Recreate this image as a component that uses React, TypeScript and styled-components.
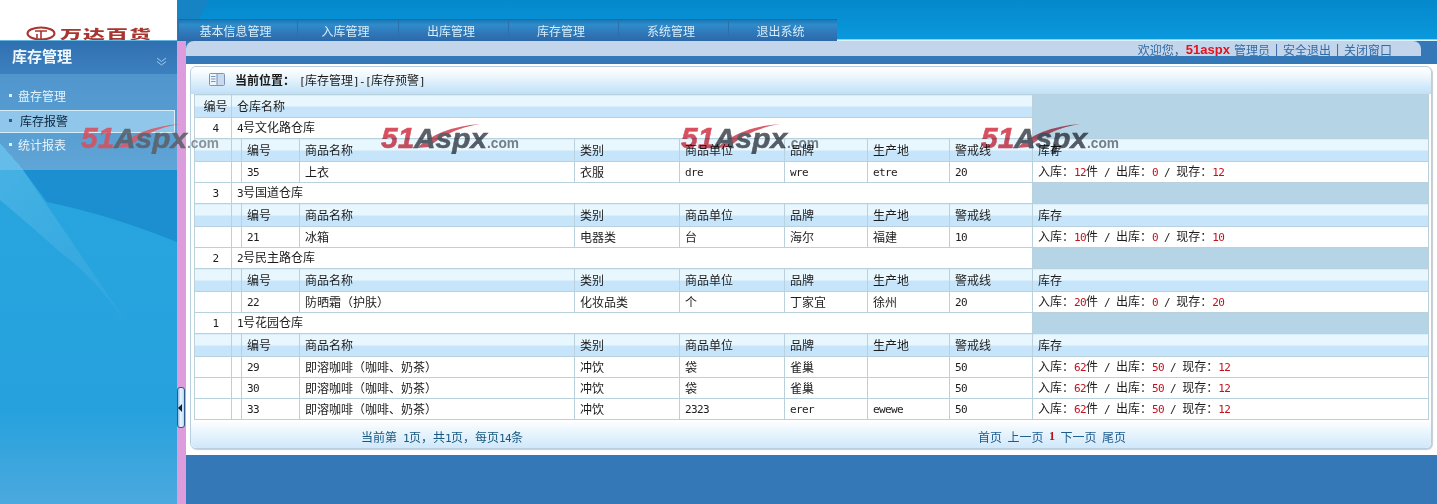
import React from "react";
import styled, { createGlobalStyle } from "styled-components";

const lineColor = "#b9d0dd";
const cjk = `"Noto Sans CJK SC", "Liberation Sans", sans-serif`;

const GlobalStyle = createGlobalStyle`
  html, body {
    margin: 0;
    padding: 0;
    height: 100%;
    overflow: hidden;
    background: #3578b8;
  }
  body {
    font-family: ${cjk};
    font-size: 12px;
  }
`;

const Page = styled.div`
  position: relative;
  width: 1437px;
  height: 504px;
  display: flex;
  flex-direction: column;
  overflow: hidden;
`;

/* ---------- top bar ---------- */

const TopBar = styled.header`
  height: 41px;
  flex: none;
  display: flex;
`;

const Logo = styled.div`
  width: 177px;
  height: 41px;
  box-sizing: border-box;
  background: white;
  padding: 26px 0 0 26px;
  display: flex;
  gap: 4px;
  overflow: hidden;
  border-bottom: 1px solid #62b4dc;
`;

const LogoMark = styled.svg`
  flex: none;
  width: 30px;
  height: 15px;
`;

const LogoText = styled.span`
  display: inline-block;
  font-size: 22px;
  line-height: 22px;
  font-weight: 900;
  letter-spacing: 1px;
  color: #a8352f;
  white-space: nowrap;
  margin-top: 1px;
  transform: scaleY(0.56);
  transform-origin: top left;
`;

const NavArea = styled.nav`
  flex: 1;
  display: flex;
  align-items: flex-end;
  padding-left: 1px;
  background:
    linear-gradient(118deg, #1583c4 0 28px, transparent 29px),
    linear-gradient(#0588cc, #0a98dc 95%, #c9eefb 97%, #e6f6fc);
`;

const Tab = styled.a<{ $w: number }>`
  width: ${(props) => props.$w}px;
  height: 22px;
  box-sizing: border-box;
  padding-right: 5px;
  display: flex;
  align-items: center;
  justify-content: center;
  color: #d7edfb;
  border-top: 1px solid #0f6fa9;
  border-left: 1px solid #2a71ac;
  background: linear-gradient(#1b78b7, #2f8ccb 22%, #2f78ba 60%, #2d69a8);
`;

/* ---------- body ---------- */

const Body = styled.div`
  flex: 1;
  display: flex;
  min-height: 0;
`;

const Sidebar = styled.aside`
  width: 177px;
  flex: none;
  display: flex;
  flex-direction: column;
`;

const SideHead = styled.div`
  height: 33px;
  flex: none;
  box-sizing: border-box;
  padding: 0 10px 5px 12px;
  display: flex;
  align-items: center;
  justify-content: space-between;
  color: #eef7fd;
  font-size: 15px;
  font-weight: 700;
  background: linear-gradient(#2f70b1, #3d80bf);
`;

const Chevrons = styled.svg`
  width: 11px;
  height: 9px;
  margin-top: 13px;
`;

const Menu = styled.ul`
  list-style: none;
  margin: 0;
  padding: 10px 0 0;
  height: 96px;
  flex: none;
  box-sizing: border-box;
  background:
    linear-gradient(229deg, transparent 91%, #66bce8 91%),
    linear-gradient(#5095cc, #5fa5d6);
`;

const MenuItem = styled.li<{ $active?: boolean }>`
  height: 23px;
  box-sizing: border-box;
  display: flex;
  align-items: center;
  gap: ${(props) => (props.$active ? 8 : 6)}px;
  padding: 0 0 ${(props) => (props.$active ? 2 : 1)}px 9px;
  color: ${(props) => (props.$active ? "#10243a" : "#e6f3fb")};
  margin: ${(props) => (props.$active ? "3px 2px 0 0" : "0")};
  border: ${(props) => (props.$active ? "1px solid #d4edf8" : "none")};
  border-left: none;
  background: ${(props) => (props.$active ? "#8fc6e9" : "none")};

  &::before {
    content: "";
    width: 3px;
    height: 3px;
    background: ${(props) => (props.$active ? "#1b5f96" : "#dff1fb")};
  }
`;

const SideArt = styled.svg`
  flex: 1;
  min-height: 0;
  width: 100%;
  display: block;
`;

const Splitter = styled.div`
  width: 9px;
  flex: none;
  background: #dd9cdb;
  padding-top: 346px;
  box-sizing: border-box;
`;

const Handle = styled.div`
  width: 8px;
  height: 41px;
  box-sizing: border-box;
  border: 1px solid #2c5a8f;
  border-radius: 3px;
  background: linear-gradient(90deg, #8fb9e2, #eef6fd 45%, #b6d7f2);
  display: flex;
  align-items: center;

  &::before {
    content: "";
    border: 4px solid transparent;
    border-left: none;
    border-right: 4px solid #10233c;
  }
`;

const Main = styled.main`
  flex: 1;
  min-width: 0;
  display: flex;
  flex-direction: column;
  background: #3578b8;
`;

const WelcomeBar = styled.div`
  height: 15px;
  width: 1235px;
  flex: none;
  box-sizing: border-box;
  padding: 1px 29px 0 0;
  display: flex;
  justify-content: flex-end;
  align-items: center;
  white-space: pre;
  overflow: hidden;
  color: #2f6ba6;
  background: #c3d5ea;
  border-radius: 8px 8px 0 0;
`;

const UserName = styled.b`
  font-family: "Liberation Sans", sans-serif;
  font-size: 13px;
  color: #e8101c;
  margin-right: 4px;
`;

const Sep = styled.span`
  width: 13px;
  text-align: center;
  font-family: "Liberation Sans", sans-serif;
`;

const Content = styled.div`
  margin-top: 8px;
  flex: none;
  background: white;
  padding: 2px 5px 6px 4px;
`;

const Panel = styled.section`
  height: 383px;
  box-sizing: border-box;
  display: flex;
  flex-direction: column;
  border: 1px solid #b7cfe0;
  border-radius: 6px;
  box-shadow: 1px 1px 1px #c6ccd0;
  background: white;
`;

const PanelTitle = styled.div`
  height: 27px;
  flex: none;
  box-sizing: border-box;
  padding: 0 0 3px 18px;
  display: flex;
  align-items: center;
  color: #1a1a1a;
  border-radius: 6px 6px 0 0;
  background: linear-gradient(white, #f4fafe 25%, #bfe0f8);
`;

const BookIcon = styled.svg`
  width: 16px;
  height: 13px;
  margin-right: 10px;
`;

const TitleLabel = styled.b`
  font-weight: 700;
`;

const TitlePath = styled.span`
  margin-left: 4px;
`;

const Grid = styled.table`
  width: 1234px;
  margin-left: 3px;
  table-layout: fixed;
  border-collapse: collapse;
  color: #1c1c1c;
`;

const Row = styled.tr<{ $h: number }>`
  height: ${(props) => props.$h}px;
`;

const Cell = styled.td<{ $head?: boolean; $center?: boolean }>`
  padding: 0 0 0 5px;
  line-height: 14px;
  border: 1px solid ${lineColor};
  text-align: ${(props) => (props.$center ? "center" : "left")};
  white-space: nowrap;
  overflow: hidden;
  background: ${(props) =>
    props.$head ? "linear-gradient(#e8f6fd 50%, #c7e5fa 50%)" : "white"};
`;

const Filler = styled.td`
  padding: 0;
  border: 1px solid ${lineColor};
  background: #b5d4e6;
`;

const Latin = styled.span`
  font-family: "DejaVu Sans Mono", "Liberation Mono", monospace;
  font-size: 11px;
  letter-spacing: -0.62px;
  white-space: pre;
`;

const RedNum = styled(Latin)`
  color: #c4101c;
`;

const PanelFooter = styled.div`
  flex: 1;
  box-sizing: border-box;
  padding: 4px 305px 0 170px;
  display: flex;
  align-items: center;
  justify-content: space-between;
  color: #17597f;
  border-radius: 0 0 6px 6px;
  background: linear-gradient(white, #f0f8fe 30%, #cfe8fb);
`;

const Pager = styled.div`
  display: flex;
  align-items: center;
  gap: 5.5px;
  color: #1d5c8e;
`;

const CurrentPage = styled.b`
  font-family: "Liberation Serif", serif;
  font-size: 12px;
  color: #b8101c;
`;

const BottomFill = styled.div`
  flex: 1;
`;

/* ---------- watermark ---------- */

const Watermarks = styled.div`
  position: absolute;
  left: 81px;
  top: 122px;
  display: flex;
  gap: 162px;
  pointer-events: none;
`;

const MarkSvg = styled.svg<{ $flat?: boolean }>`
  width: 138px;
  height: 32px;
  flex: none;
  mix-blend-mode: ${(props) => (props.$flat ? "normal" : "multiply")};
  opacity: ${(props) => (props.$flat ? 0.88 : 1)};
`;

const Watermark = ({ flat }: { flat?: boolean }) => (
  <MarkSvg viewBox="0 0 138 32" $flat={flat}>
    <path d="M36 26 Q58 5 99 2 Q68 7 48 25 Z" fill="#d85a68" />
    <text x="0" y="26" fontFamily="Liberation Sans" fontWeight="700" fontStyle="italic" fontSize="30" fill="#d8505f" stroke="#d8505f" strokeWidth="0.5">
      51
    </text>
    <text x="33" y="26" fontFamily="Liberation Sans" fontWeight="700" fontStyle="italic" fontSize="27" fill="#5c6068" stroke="#5c6068" strokeWidth="0.5" textLength="73" lengthAdjust="spacingAndGlyphs">
      Aspx
    </text>
    <text x="106" y="26" fontFamily="Liberation Sans" fontWeight="700" fontSize="15" fill="#7f858c" textLength="32" lengthAdjust="spacingAndGlyphs">
      .com
    </text>
  </MarkSvg>
);

/* ---------- data ---------- */

type Item = {
  id: string;
  name: string;
  kind: string;
  unit: string;
  brand: string;
  origin: string;
  limit: string;
  inn: string;
  out: string;
  now: string;
};

const coffee = "即溶咖啡（咖啡、奶茶）";

const stores: { id: string; name: string; items: Item[] }[] = [
  {
    id: "4",
    name: "4号文化路仓库",
    items: [
      { id: "35", name: "上衣", kind: "衣服", unit: "dre", brand: "wre", origin: "etre", limit: "20", inn: "12", out: "0", now: "12" },
    ],
  },
  {
    id: "3",
    name: "3号国道仓库",
    items: [
      { id: "21", name: "冰箱", kind: "电器类", unit: "台", brand: "海尔", origin: "福建", limit: "10", inn: "10", out: "0", now: "10" },
    ],
  },
  {
    id: "2",
    name: "2号民主路仓库",
    items: [
      { id: "22", name: "防晒霜（护肤）", kind: "化妆品类", unit: "个", brand: "丁家宜", origin: "徐州", limit: "20", inn: "20", out: "0", now: "20" },
    ],
  },
  {
    id: "1",
    name: "1号花园仓库",
    items: [
      { id: "29", name: coffee, kind: "冲饮", unit: "袋", brand: "雀巢", origin: "", limit: "50", inn: "62", out: "50", now: "12" },
      { id: "30", name: coffee, kind: "冲饮", unit: "袋", brand: "雀巢", origin: "", limit: "50", inn: "62", out: "50", now: "12" },
      { id: "33", name: coffee, kind: "冲饮", unit: "2323", brand: "erer", origin: "ewewe", limit: "50", inn: "62", out: "50", now: "12" },
    ],
  },
];

const colWidths = [37, 10, 58, 275, 105, 105, 83, 82, 83, 396];
const itemHeads = ["编号", "商品名称", "类别", "商品单位", "品牌", "生产地", "警戒线", "库存"];

// SimSun-like spacing: latin runs are half the width of a CJK glyph
function mix(text: string) {
  return text.split(/([\x20-\x7e]+)/).map((part, i) =>
    /^[\x20-\x7e]+$/.test(part) ? <Latin key={i}>{part}</Latin> : part
  );
}

const Stock = ({ item }: { item: Item }) => (
  <>
    入库：<RedNum>{item.inn}</RedNum>件<Latin> / </Latin>出库：<RedNum>{item.out}</RedNum>
    <Latin> / </Latin>现存：<RedNum>{item.now}</RedNum>
  </>
);

const StoreGroup = ({ store }: { store: (typeof stores)[number] }) => (
  <>
    <Row $h={21}>
      <Cell $center>{mix(store.id)}</Cell>
      <Cell colSpan={8}>{mix(store.name)}</Cell>
      {store.id !== "4" && <Filler />}
    </Row>
    <Row $h={23}>
      <Cell $head />
      <Cell $head />
      {itemHeads.map((head) => (
        <Cell $head key={head}>
          {head}
        </Cell>
      ))}
    </Row>
    {store.items.map((item) => (
      <Row $h={21} key={item.id}>
        <Cell />
        <Cell />
        <Cell>{mix(item.id)}</Cell>
        <Cell>{item.name}</Cell>
        <Cell>{item.kind}</Cell>
        <Cell>{mix(item.unit)}</Cell>
        <Cell>{mix(item.brand)}</Cell>
        <Cell>{mix(item.origin)}</Cell>
        <Cell>{mix(item.limit)}</Cell>
        <Cell>
          <Stock item={item} />
        </Cell>
      </Row>
    ))}
  </>
);

export default function App() {
  return (
    <Page>
      <GlobalStyle />
      <TopBar>
        <Logo>
          <LogoMark viewBox="0 0 30 15">
            <ellipse cx="15" cy="7.5" rx="13.5" ry="6" fill="none" stroke="#a8352f" strokeWidth="2" />
            <path d="M9 5 H21 M15 5 V13 M11 8 V12" fill="none" stroke="#a8352f" strokeWidth="1.6" />
          </LogoMark>
          <LogoText>万达百货</LogoText>
        </Logo>
        <NavArea>
          <Tab $w={119}>基本信息管理</Tab>
          <Tab $w={101}>入库管理</Tab>
          <Tab $w={110}>出库管理</Tab>
          <Tab $w={110}>库存管理</Tab>
          <Tab $w={110}>系统管理</Tab>
          <Tab $w={109}>退出系统</Tab>
        </NavArea>
      </TopBar>
      <Body>
        <Sidebar>
          <SideHead>
            库存管理
            <Chevrons viewBox="0 0 11 9">
              <path d="M1 1 L5.5 4.5 L10 1 M1 4.5 L5.5 8 L10 4.5" fill="none" stroke="#9ccaee" strokeWidth="1" />
            </Chevrons>
          </SideHead>
          <Menu>
            <MenuItem>盘存管理</MenuItem>
            <MenuItem $active>库存报警</MenuItem>
            <MenuItem>统计报表</MenuItem>
          </Menu>
          <SideArt viewBox="0 0 177 334" preserveAspectRatio="none">
            <defs>
              <linearGradient id="sideBase" x1="0" y1="0" x2="0" y2="1">
                <stop offset="0" stopColor="#28a5df" />
                <stop offset="0.72" stopColor="#26a1dd" />
                <stop offset="1" stopColor="#4ca9dd" />
              </linearGradient>
              <linearGradient id="streak" x1="0" y1="0" x2="1" y2="1">
                <stop offset="0" stopColor="#ffffff" stopOpacity="0.14" />
                <stop offset="0.6" stopColor="#ffffff" stopOpacity="0.06" />
                <stop offset="1" stopColor="#ffffff" stopOpacity="0.03" />
              </linearGradient>
            </defs>
            <rect width="177" height="334" fill="url(#sideBase)" />
            <path d="M23 0 H177 V72 Q110 45 47 32 Z" fill="#1b8fd0" />
            <path d="M0 0 H23 L150 187 Q100 110 60 82 Q30 55 0 30 Z" fill="url(#streak)" />
          </SideArt>
        </Sidebar>
        <Splitter>
          <Handle />
        </Splitter>
        <Main>
          <WelcomeBar>
            欢迎您，<UserName>51aspx</UserName>
            管理员<Sep>|</Sep>安全退出<Sep>|</Sep>关闭窗口
          </WelcomeBar>
          <Content>
            <Panel>
              <PanelTitle>
                <BookIcon viewBox="0 0 16 13">
                  <rect x="0.5" y="0.5" width="15" height="12" rx="1" fill="#eef4fb" stroke="#7d93b8" />
                  <rect x="8" y="1" width="7" height="11" fill="#c9d9ee" />
                  <path d="M8 1 V12 M2 3.5 H6.5 M2 6 H6.5 M2 8.5 H6.5" stroke="#7d93b8" fill="none" />
                </BookIcon>
                <TitleLabel>当前位置：</TitleLabel>
                <TitlePath>{mix("[库存管理]-[库存预警]")}</TitlePath>
              </PanelTitle>
              <Grid>
                <colgroup>
                  {colWidths.map((width, i) => (
                    <col key={i} style={{ width }} />
                  ))}
                </colgroup>
                <tbody>
                  <Row $h={23}>
                    <Cell $head $center>
                      编号
                    </Cell>
                    <Cell $head colSpan={8}>
                      仓库名称
                    </Cell>
                    <Filler rowSpan={2} />
                  </Row>
                  {stores.map((store) => (
                    <StoreGroup store={store} key={store.id} />
                  ))}
                </tbody>
              </Grid>
              <PanelFooter>
                <span>{mix("当前第 1页，共1页，每页14条")}</span>
                <Pager>
                  <span>首页</span>
                  <span>上一页</span>
                  <CurrentPage>1</CurrentPage>
                  <span>下一页</span>
                  <span>尾页</span>
                </Pager>
              </PanelFooter>
            </Panel>
          </Content>
          <BottomFill />
        </Main>
      </Body>
      <Watermarks>
        <Watermark flat />
        <Watermark />
        <Watermark />
        <Watermark />
      </Watermarks>
    </Page>
  );
}
